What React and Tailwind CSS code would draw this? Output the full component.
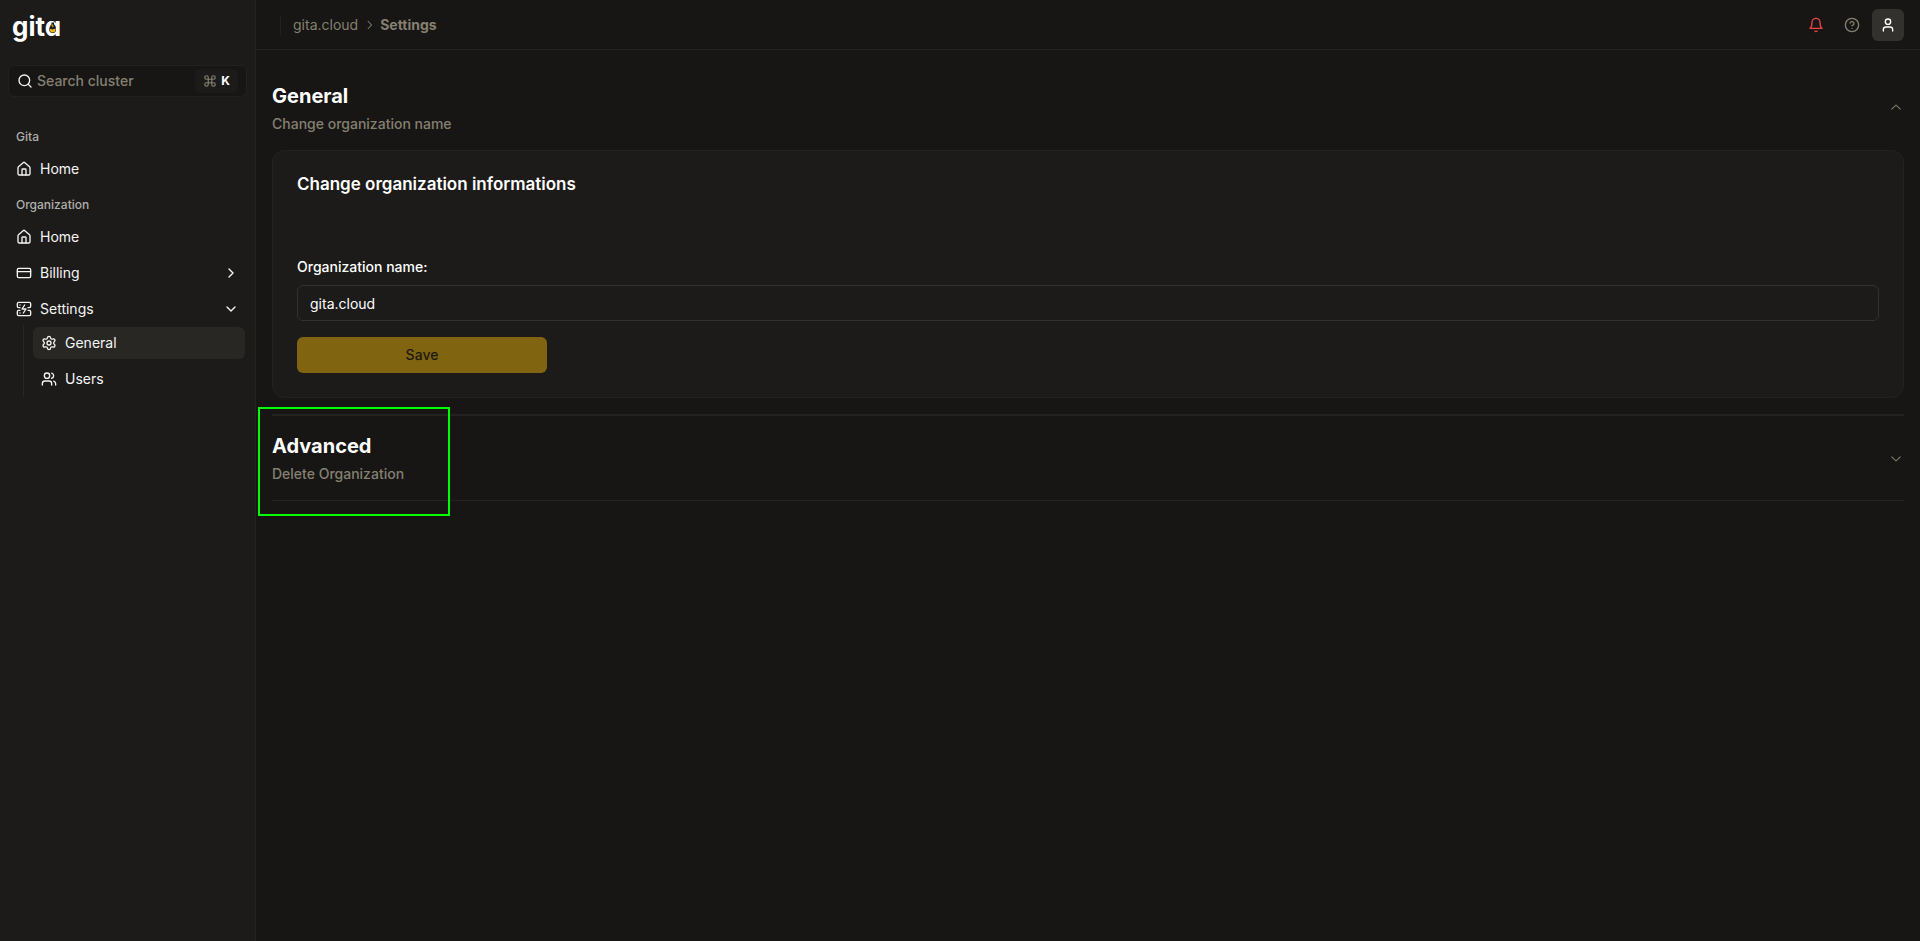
import { useState } from 'react'
import {
  ChevronDown,
  ChevronRight,
  CircleHelp,
  Command,
  CreditCard,
  House,
  Search,
  ServerCrash,
  Settings,
  User,
  Users
} from 'lucide-react'

const Logo = () => (
  <a href="#" className="relative flex h-8 w-fit items-center text-[26px] font-bold text-white [font-feature-settings:'cv11']">
    gita
    <svg viewBox="0 0 8 12" className="absolute top-3 right-1 h-3 w-2" aria-hidden="true">
      <circle cx="3.6" cy="7.4" r="3.4" fill="#1c1b19" />
      <path d="M2.4 0.4H5.2L4.8 4H2.8Z" fill="#1c1b19" />
      <path d="M0.6 6.8 L3.8 7.6 L6.6 6.2 Q7 10.4 3.6 10.4 Q0.6 10.4 0.6 6.8Z" fill="#f0b323" />
      <path d="M2.6 2 L3.8 2.6 L4.8 4.4 L3.8 5.4 L2.6 4Z" fill="#c98f1e" />
    </svg>
  </a>
)

const BellIcon = () => (
  <svg
    width="16"
    height="16"
    viewBox="0 0 24 24"
    fill="none"
    stroke="currentColor"
    strokeWidth="2"
    strokeLinecap="round"
    strokeLinejoin="round"
    aria-hidden="true"
  >
    <path d="M6 8a6 6 0 0 1 12 0c0 7 3 9 3 9H3s3-2 3-9" />
    <path d="M10.3 21a1.94 1.94 0 0 0 3.4 0" />
  </svg>
)

const Chevron = ({ size = 15, className }) => (
  <svg width={size} height={size} viewBox="0 0 15 15" fill="currentColor" className={className} aria-hidden="true">
    <path d="M3.135 6.158C3.324 5.957 3.641 5.946 3.842 6.135L7.5 9.565L11.158 6.135C11.36 5.946 11.676 5.957 11.865 6.158C12.054 6.359 12.043 6.676 11.842 6.865L7.842 10.615C7.65 10.795 7.35 10.795 7.158 10.615L3.158 6.865C2.957 6.676 2.946 6.359 3.135 6.158Z" />
  </svg>
)

const NavItem = ({ icon: Icon, label, trailing: Trailing, active }) => (
  <a
    href="#"
    className={`flex h-8 items-center gap-2 rounded-md px-2 text-sm text-[#f5f5f4] ${active ? 'bg-[#282724]' : ''}`}
  >
    <Icon size={16} />
    <span className="flex-1">{label}</span>
    {Trailing && <Trailing size={16} />}
  </a>
)

const NavLabel = ({ children }) => (
  <div className="flex h-8 items-center px-2 text-xs font-medium text-[#b0afab]">{children}</div>
)

const Sidebar = () => (
  <aside className="flex w-64 shrink-0 flex-col border-r border-[#23221f] bg-[#1c1b19] px-2">
    <div className="px-1 pt-2.5">
      <Logo />
    </div>

    <div className="mt-[23px] flex h-8 items-center gap-1 rounded-md border border-[#22211e] bg-[#171614] px-2">
      <Search size={16} className="shrink-0 text-[#f5f5f4]" />
      <input
        type="text"
        aria-label="Search cluster"
        placeholder="Search cluster"
        className="min-w-0 flex-1 bg-transparent text-sm font-medium text-white outline-none placeholder:text-[#858071]"
      />
      <kbd className="flex h-6 items-center gap-1 rounded-md bg-[#1c1b19] px-2 font-[Inter] text-xs font-bold text-white">
        <Command size={14} className="text-[#858071]" />
        K
      </kbd>
    </div>

    <nav className="mt-6 flex flex-col gap-1">
      <div>
        <NavLabel>Gita</NavLabel>
        <NavItem icon={House} label="Home" />
      </div>
      <div>
        <NavLabel>Organization</NavLabel>
        <div className="flex flex-col gap-1">
          <NavItem icon={House} label="Home" />
          <NavItem icon={CreditCard} label="Billing" trailing={ChevronRight} />
          <NavItem icon={ServerCrash} label="Settings" trailing={ChevronDown} />
        </div>
        <div className="mr-0.5 ml-[15px] flex flex-col gap-1 border-l border-[#282724] py-0.5 pl-[9px]">
          <NavItem icon={Settings} label="General" active />
          <NavItem icon={Users} label="Users" />
        </div>
      </div>
    </nav>
  </aside>
)

const TopBar = () => (
  <header className="flex h-[50px] items-center justify-between border-b border-[#23221f] px-4">
    <nav aria-label="Breadcrumb" className="ml-2 flex h-5 items-center gap-1 border-l border-[#23221f] pl-3 text-sm text-[#858071]">
      <a href="#">gita.cloud</a>
      <Chevron size={14} className="-rotate-90" />
      <span className="font-bold">Settings</span>
    </nav>
    <div className="flex items-center gap-1">
      <button aria-label="Notifications" className="flex size-8 items-center justify-center rounded-md text-[#ef4444]">
        <BellIcon />
      </button>
      <button aria-label="Help" className="flex size-8 items-center justify-center rounded-md text-[#858071]">
        <CircleHelp size={16} />
      </button>
      <button aria-label="Account" className="flex size-8 items-center justify-center rounded-md bg-[#32312d] text-white">
        <User size={16} />
      </button>
    </div>
  </header>
)

const SectionTrigger = ({ title, description, open, onClick }) => (
  <button onClick={onClick} className="flex w-full items-center justify-between py-4 text-left">
    <span className="flex flex-col gap-1">
      <span className="text-xl leading-7 font-bold text-white">{title}</span>
      <span className="text-sm font-medium text-[#858071]">{description}</span>
    </span>
    <Chevron size={16} className={`text-[#858071] ${open ? 'rotate-180' : ''}`} />
  </button>
)

const App = () => {
  const [generalOpen, setGeneralOpen] = useState(true)
  const [name, setName] = useState('gita.cloud')

  return (
    <div className="flex min-h-screen bg-[#171614] font-[Inter,sans-serif] text-white">
      <Sidebar />
      <div className="min-w-0 flex-1">
        <TopBar />
        <main className="p-4">
          <section className="border-b-2 border-[#23221f]">
            <SectionTrigger
              title="General"
              description="Change organization name"
              open={generalOpen}
              onClick={() => setGeneralOpen(!generalOpen)}
            />
            {generalOpen && (
              <div className="pb-4">
                <form className="rounded-xl border border-[#23221f] bg-[#1c1b19] p-6" onSubmit={e => e.preventDefault()}>
                  <h3 className="text-[17px] leading-[18px] font-semibold">Change organization informations</h3>
                  <div className="mt-16 flex flex-col gap-2">
                    <label htmlFor="org-name" className="text-sm font-medium">Organization name:</label>
                    <input
                      id="org-name"
                      type="text"
                      value={name}
                      onChange={e => setName(e.target.value)}
                      className="h-9 w-full rounded-md border border-[#32312d] bg-transparent px-3 text-sm outline-none"
                    />
                  </div>
                  <button type="submit" className="mt-4 block h-9 w-[250px] rounded-md bg-[#816410] text-sm font-medium text-[#1c1a12]">
                    Save
                  </button>
                </form>
              </div>
            )}
          </section>

          <section className="relative border-b border-[#23221f]">
            <SectionTrigger title="Advanced" description="Delete Organization" />
            {/* Highlight frame */}
            <div className="pointer-events-none absolute -top-[9px] -left-3.5 h-[109px] w-48 border-2 border-[#00ff00]" />
          </section>
        </main>
      </div>
    </div>
  )
}

export default App
